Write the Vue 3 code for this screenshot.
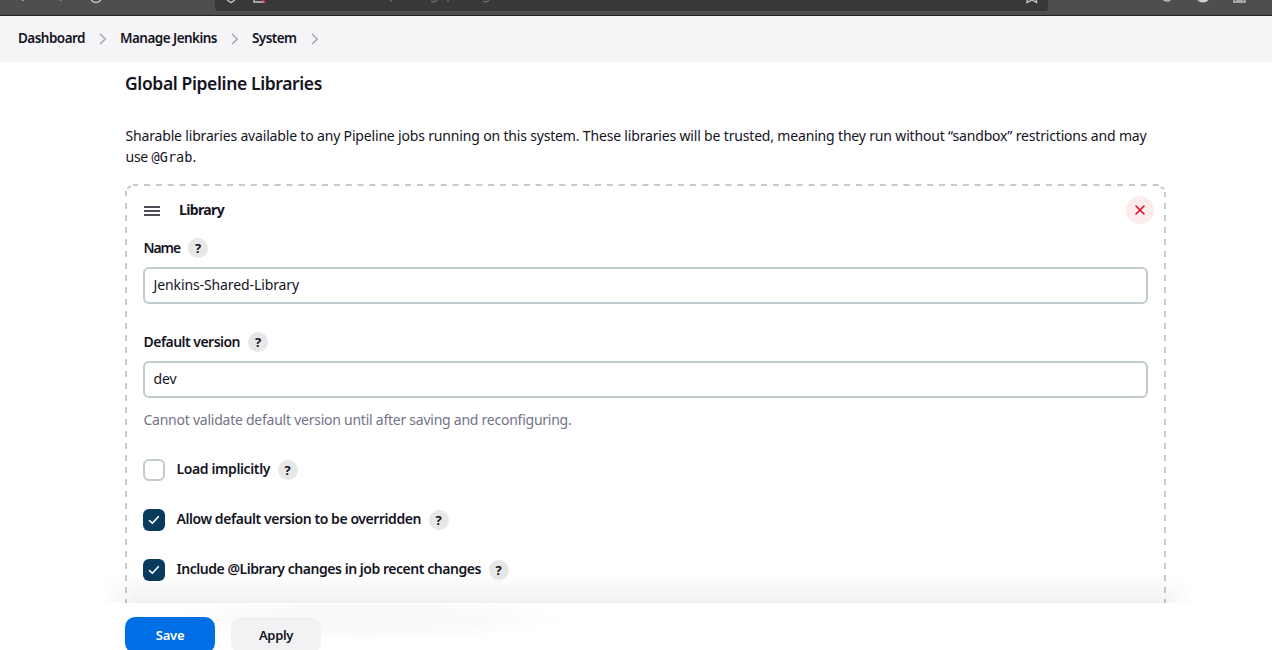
<script setup>
const crumbs = [
  { text: 'Dashboard', width: 67 },
  { text: 'Manage Jenkins', width: 97 },
  { text: 'System', width: 44.5 },
]

const options = [
  { text: 'Load implicitly', width: 93.5, checked: false },
  { text: 'Allow default version to be overridden', width: 244.5, checked: true },
  { text: 'Include @Library changes in job recent changes', width: 304.5, checked: true },
]

// Tracks a run of text so that it fills the given measure.
const vFit = {
  mounted(el, { value }) {
    const natural = el.getBoundingClientRect().width
    el.style.letterSpacing = `${(value - natural) / el.textContent.length}px`
  },
}
</script>

<template>
  <div class="page">
    <header class="browser">
      <svg width="1272" height="16" fill="none">
        <rect x="215" y="-8" width="833" height="19" rx="4" fill="#383838" />
        <g stroke="#c4c4c4" stroke-width="1.4">
          <path d="M22 -2l1 3" />
          <path d="M62 -1l-2 2" stroke="#858585" />
          <circle cx="96" cy="-3" r="5.5" />
          <path d="M226 -3q1 4 5 5.500q4-1.500 5-5.500" />
          <path d="M254 -3v5h10" />
          <path d="M1027.500 -2l-.5 4.500 4.800-2.500 4.800 2.500-.5-4.500" />
          <circle cx="1167" cy="-4" r="5" />
          <path d="M1234 -3v5h11v-5M1236 0h7" />
        </g>
        <path d="M261 -2l4 4.500" stroke="#f0264b" stroke-width="1.700" />
        <circle cx="1203" cy="-5" r="7.500" fill="#d0d0d0" />
        <g stroke="#707070" stroke-width="1.300">
          <path d="M391 0v2M448 0v2M431 1q4 2 6-1M483 1q4 2 6-1" />
        </g>
      </svg>
    </header>

    <nav class="crumbs">
      <template v-for="c in crumbs" :key="c.text">
        <span class="crumb"><span v-fit="c.width">{{ c.text }}</span></span>
        <svg class="chevron" width="8" height="12" fill="none" stroke="#a6a6b8" stroke-width="1.700"
             stroke-linecap="round" stroke-linejoin="round"><path d="M1.500 1.500L6.300 6L1.500 10.500" /></svg>
      </template>
    </nav>

    <main>
      <h1><span v-fit="197">Global Pipeline Libraries</span></h1>
      <p class="intro">
        <span v-fit="1021">Sharable libraries available to any Pipeline jobs running on this system. These libraries will be trusted, meaning they run without “sandbox” restrictions and may</span><br>
        <span v-fit="22.5">use</span><code v-fit="41">@Grab</code>.
      </p>

      <section class="library">
        <svg class="frame" width="1041" height="440" fill="none" stroke="#c1cbd0" stroke-width="2">
          <path d="M19 1H1035" stroke-dasharray="6 5.867" />
          <path d="M1 19V440M1040 19V440" stroke-dasharray="6 6" />
          <path d="M1 12V7M2.500 5Q4 2.500 6 2M8 1H13M1036 3L1039 5M1040 8V13" />
        </svg>

        <div class="library-head">
          <svg width="16" height="10" stroke="#14141f" stroke-width="1.500"><path d="M0 1h16M0 5h16M0 9h16" /></svg>
          <b><span v-fit="45">Library</span></b>
          <button class="remove"><svg width="12" height="12" stroke="#e6001f" stroke-width="1.500" stroke-linecap="round"><path d="M2 2l8 8M10 2l-8 8" /></svg></button>
        </div>

        <div class="label"><span v-fit="36.5">Name</span><i class="help">?</i></div>
        <div class="input"><span v-fit="145.500">Jenkins-Shared-Library</span></div>

        <div class="label second"><span v-fit="96.500">Default version</span><i class="help">?</i></div>
        <div class="input"><span v-fit="23">dev</span></div>
        <div class="hint"><span v-fit="428">Cannot validate default version until after saving and reconfiguring.</span></div>

        <div class="option" v-for="o in options" :key="o.text">
          <span class="box" :class="{ on: o.checked }">
            <svg v-if="o.checked" width="12" height="10" fill="none" stroke="#fff" stroke-width="1.600"
                 stroke-linecap="round" stroke-linejoin="round"><path d="M1.500 5.500L4.300 8.300L10.300 1.700" /></svg>
          </span>
          <span class="option-text"><span v-fit="o.width">{{ o.text }}</span></span>
          <i class="help">?</i>
        </div>
      </section>
    </main>

    <div class="bar-shadow"></div>
    <footer class="actions">
      <div class="glow"></div>
      <button class="action primary"><span v-fit="28.500">Save</span></button>
      <button class="action"><span v-fit="34">Apply</span></button>
    </footer>
  </div>
</template>

<style>
body { background: #fff; }
</style>

<style scoped>
.page {
  position: relative;
  height: 650px;
  overflow: hidden;
  color: #14141f;
  font: 14px/21px "Noto Sans", "Open Sans", sans-serif;
}
.page span, code { white-space: nowrap; }
.browser {
  height: 15px;
  background: #4e4e4e;
  border-bottom: 1px solid #252224;
  overflow: hidden;
}
.browser svg { display: block; }
.crumbs {
  display: flex;
  align-items: center;
  height: 46px;
  padding-left: 18px;
  background: #f5f5f8;
  font-size: 13.500px;
  font-weight: 600;
}
.crumb { line-height: 20px; margin-top: -3px; }
.chevron { margin: 0 13px 0 14px; flex: none; }
main { width: 1041px; margin-left: 125px; }
h1 {
  margin: 0;
  padding-top: 9px;
  height: 54px;
  font-size: 17.500px;
  line-height: 24px;
  font-weight: 600;
}
.intro { margin: 0; height: 59px; padding-left: 0.5px; }
code {
  font: 13.500px/18px "DejaVu Sans Mono", monospace;
  margin-left: 3.500px;
}
.library {
  position: relative;
  box-sizing: border-box;
  height: 440px;
  padding: 12px 18px 0;
}
.frame { position: absolute; inset: 0; }
.library-head {
  display: flex;
  align-items: center;
  height: 28px;
  margin-right: -6px;
}
.library-head > svg { margin: 2px 19px 0 1px; }
.library-head b { font-weight: 700; margin-top: -2px; }
button { border: 0; padding: 0; font: inherit; color: inherit; }
.remove {
  display: flex;
  align-items: center;
  justify-content: center;
  width: 28px;
  height: 28px;
  margin-left: auto;
  border-radius: 50%;
  background: #fdebed;
}
.label {
  display: flex;
  align-items: center;
  gap: 8px;
  height: 20px;
  margin-top: 14px;
  padding-left: 0.5px;
  font-weight: 600;
}
.label > span { padding-bottom: 2px; }
.label.second { margin-top: 28px; }
.help {
  display: flex;
  align-items: center;
  justify-content: center;
  width: 20px;
  height: 20px;
  border-radius: 50%;
  background: #e7e7e7;
  font-style: normal;
  font-size: 13px;
  font-weight: 700;
}
.input {
  box-sizing: border-box;
  height: 37px;
  margin-top: 9px;
  padding: 5px 8.500px;
  border: 2px solid #c1cbd0;
  border-radius: 6px;
  background: #fff;
}
.hint { margin-top: 11px; height: 50px; padding-left: 0.5px; color: #737388; }
.option {
  display: flex;
  align-items: center;
  height: 22px;
  margin-bottom: 28px;
  font-weight: 600;
}
.option .help { margin-left: 7.500px; }
.option-text { margin: -4px 0 0 11.500px; }
.box {
  display: flex;
  align-items: center;
  justify-content: center;
  box-sizing: border-box;
  width: 22px;
  height: 22px;
  border: 2px solid #c1cbd0;
  border-radius: 6px;
}
.box.on { border: 0; background: #093b5d; }
.bar-shadow {
  position: absolute;
  left: 100px;
  right: 80px;
  top: 573px;
  height: 30px;
  background: linear-gradient(rgba(0, 0, 0, 0), rgba(0, 0, 0, 0.055));
  mask-image: linear-gradient(90deg, transparent, #000 35px, #000 calc(100% - 30px), transparent);
}
.actions {
  position: absolute;
  inset: 603px 0 0;
  display: flex;
  gap: 16px;
  padding: 14px 0 0 125px;
  background: #fff;
  overflow: hidden;
}
.glow {
  position: absolute;
  left: 160px;
  top: -6px;
  width: 410px;
  height: 44px;
  background: radial-gradient(closest-side, rgba(0, 0, 0, 0.025), rgba(0, 0, 0, 0.018) 60%, transparent);
}
.action {
  position: relative;
  width: 90px;
  height: 36px;
  border-radius: 10px;
  background: #f2f2f5;
  font-size: 13px;
  font-weight: 600;
}
.primary { background: #006fe6; color: #fff; }
</style>
